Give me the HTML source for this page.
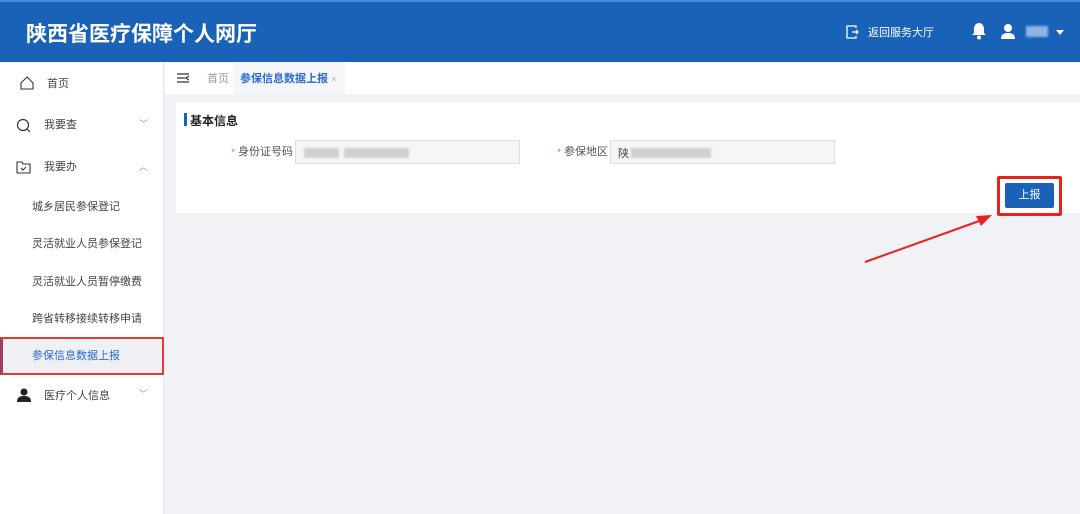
<!DOCTYPE html><html><head><meta charset="utf-8"><style>
*{margin:0;padding:0;box-sizing:border-box}
body{width:1080px;height:514px;overflow:hidden;font-family:"Liberation Sans","Noto Sans CJK SC",sans-serif;background:#f0f2f5;position:relative;font-size:11px;color:#333}
.hd{position:absolute;left:0;top:0;width:1080px;height:62px;background:#1a62b8;border-top:2px solid #4a8ad6}
.hd h1{position:absolute;left:26px;top:16px;color:#fff;font-size:21px;font-weight:bold}
.sb{position:absolute;left:0;top:62px;width:164px;height:452px;background:#fff;border-right:1px solid #e6e6e6}
.it{position:absolute;font-size:11px;color:#444;line-height:14px}
.tb{position:absolute;left:165px;top:62px;width:915px;height:32px;background:#fff}
.card{position:absolute;left:176px;top:102px;width:904px;height:111px;background:#fff}
.ip{position:absolute;height:24px;background:#f5f6f8;border:1px solid #e0e0e0}
.blur{position:absolute;height:10px;background:#cfd0d3;top:7px;filter:blur(1px)}
.lb{position:absolute;top:43px;color:#555;text-align:right;line-height:14px}
</style></head><body>
<div class="hd"><h1>陕西省医疗保障个人网厅</h1>
<svg style="position:absolute;left:845px;top:22px" width="14" height="16"><path d="M11 4V2H2v12h9v-2M7 8h6M11 6l2 2-2 2" stroke="#fff" fill="none" stroke-width="1.3"/></svg>
<div style="position:absolute;left:868px;top:22px;color:#fff;font-size:11px">返回服务大厅</div>
<svg style="position:absolute;left:971px;top:19px" width="16" height="20"><path d="M8 2c-3 0-5 2.5-5 6v4l-2 2h14l-2-2V8c0-3.5-2-6-5-6z" fill="#fff"/><circle cx="8" cy="16.5" r="2" fill="#fff"/></svg>
<svg style="position:absolute;left:1000px;top:21px" width="16" height="16"><circle cx="8" cy="5" r="4" fill="#fff"/><path d="M1 16c0-5 3-6 7-6s7 1 7 6z" fill="#fff"/></svg>
<div style="position:absolute;left:1026px;top:24px;width:22px;height:11px;background:#8fb3e2;filter:blur(1px)"></div>
<svg style="position:absolute;left:1056px;top:28px" width="8" height="5"><path d="M0 0h8L4 5z" fill="#fff"/></svg>
</div>
<div class="sb">
<svg style="position:absolute;left:20px;top:14px" width="14" height="14"><path d="M1 7L7 1l6 6v6H1z" stroke="#333" fill="none" stroke-width="1.1"/></svg>
<div class="it" style="left:47px;top:15px">首页</div>
<svg style="position:absolute;left:16px;top:56px" width="16" height="16"><circle cx="7" cy="7" r="5.5" stroke="#333" fill="none" stroke-width="1.2"/><path d="M11 11l3 3" stroke="#333" stroke-width="1.2"/></svg>
<div class="it" style="left:44px;top:56px">我要查</div>
<div style="position:absolute;left:139px;top:55px;color:#999;font-size:9px">﹀</div>
<svg style="position:absolute;left:16px;top:98px" width="15" height="14"><path d="M1 2h5l1 2h7v9H1z" stroke="#333" fill="none" stroke-width="1.1"/><path d="M5 8l2 2 3-3" stroke="#333" fill="none"/></svg>
<div class="it" style="left:44px;top:98px">我要办</div>
<div style="position:absolute;left:139px;top:98px;color:#999;font-size:9px">︿</div>
<div class="it" style="left:32px;top:138px">城乡居民参保登记</div>
<div class="it" style="left:32px;top:175px">灵活就业人员参保登记</div>
<div class="it" style="left:32px;top:213px">灵活就业人员暂停缴费</div>
<div class="it" style="left:32px;top:250px">跨省转移接续转移申请</div>
<div style="position:absolute;left:0;top:275px;width:164px;height:38px;background:#eef0f4;border:2px solid #e53935;border-left:3px solid #a04060"></div>
<div class="it" style="left:32px;top:287px;color:#2b6bd0">参保信息数据上报</div>
<svg style="position:absolute;left:17px;top:326px" width="14" height="14"><circle cx="7" cy="4" r="3.5" fill="#222"/><path d="M0 14c0-5 3-6 7-6s7 1 7 6z" fill="#222"/></svg>
<div class="it" style="left:44px;top:327px">医疗个人信息</div>
<div style="position:absolute;left:139px;top:325px;color:#999;font-size:9px">﹀</div>
</div>
<div class="tb">
<svg style="position:absolute;left:12px;top:11px" width="12" height="11"><path d="M0 1h12M0 5h8M0 9h12M12 3l-3 2 3 2" stroke="#333" fill="none" stroke-width="1.2"/></svg>
<div style="position:absolute;left:42px;top:8px;color:#999">首页</div>
<div style="position:absolute;left:68px;top:0;width:112px;height:32px;background:#f4f6f9"></div>
<div style="position:absolute;left:75px;top:8px;color:#2b6bd0;font-weight:bold">参保信息数据上报 <span style="color:#aaa;font-weight:normal;font-size:9px">×</span></div>
</div>
<div class="card">
<div style="position:absolute;left:8px;top:11px;width:3px;height:13px;background:#1a62b8"></div>
<div style="position:absolute;left:14px;top:10px;font-size:12px;font-weight:bold;color:#222">基本信息</div>
<div class="lb" style="left:20px;width:97px"><span style="color:#e55;font-size:9px">*</span> 身份证号码</div>
<div class="ip" style="left:119px;top:38px;width:225px"><div class="blur" style="left:8px;width:35px"></div><div class="blur" style="left:48px;width:65px"></div></div>
<div class="lb" style="left:340px;width:92px"><span style="color:#e55;font-size:9px">*</span> 参保地区</div>
<div class="ip" style="left:434px;top:38px;width:225px"><span style="position:absolute;left:7px;top:4px;color:#444">陕</span><div class="blur" style="left:20px;width:80px"></div></div>
<div style="position:absolute;left:821px;top:74px;width:65px;height:40px;border:3px solid #e8231f;border-radius:2px"></div>
<div style="position:absolute;left:829px;top:81px;width:49px;height:25px;background:#1a62b8;color:#fff;text-align:center;line-height:25px;border-radius:2px">上报</div>
</div>
<svg style="position:absolute;left:860px;top:205px" width="140" height="65"><path d="M5 57L122 15" stroke="#e8231f" stroke-width="2"/><path d="M132 10l-16 1 5 10z" fill="#e8231f"/></svg>
</body></html>
